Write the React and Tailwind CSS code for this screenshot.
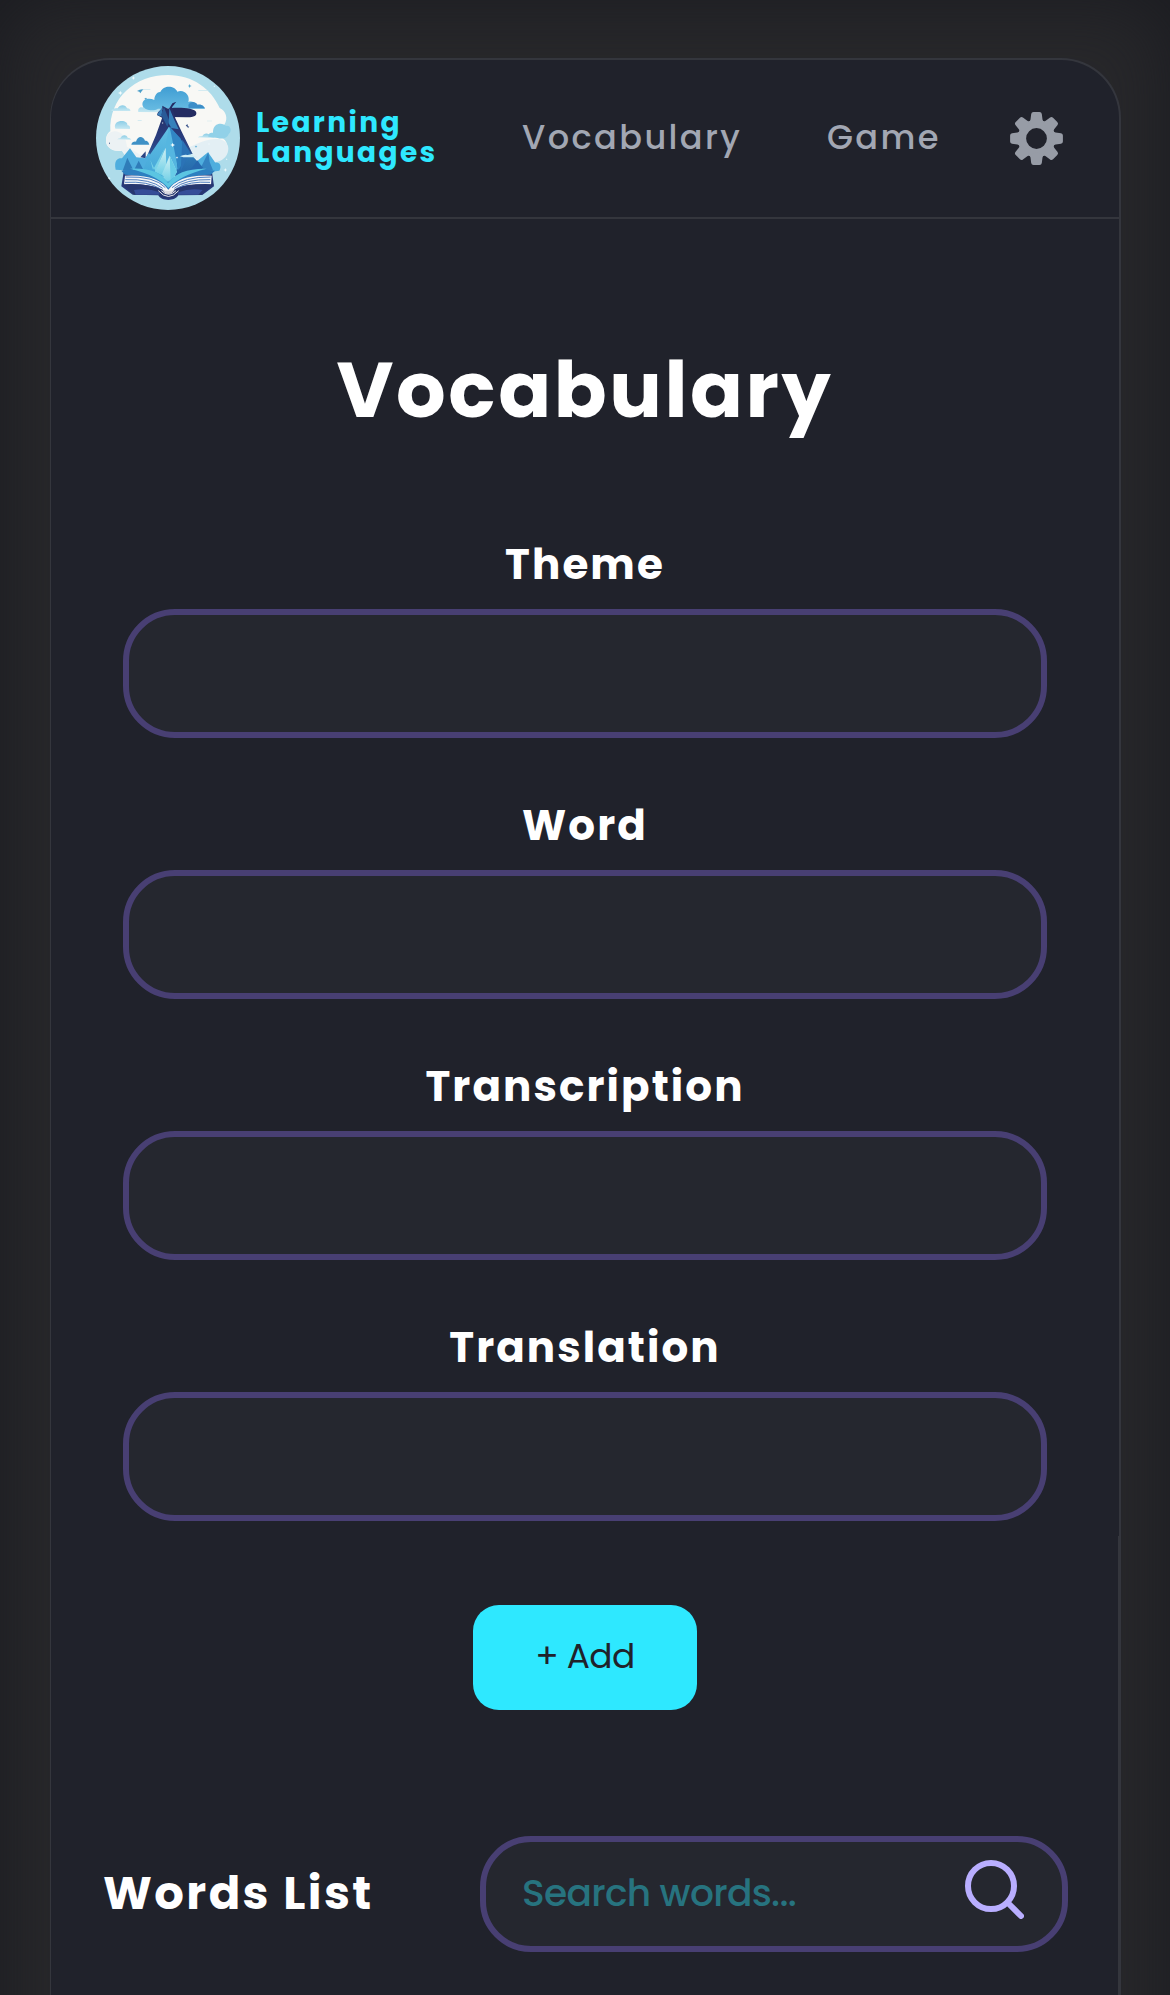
import React from "react";

const fields = [
  { id: "theme", label: "Theme" },
  { id: "word", label: "Word" },
  { id: "transcription", label: "Transcription" },
  { id: "translation", label: "Translation" },
];

const stars = [
  [121, 114, 7], [160, 69, 6], [329, 93, 6], [278, 270, 7], [436, 345, 6], [87, 370, 5],
  [348, 275, 4], [291, 308, 4], [387, 267, 3], [403, 94, 3], [440, 313, 3], [248, 204, 3],
];

function Logo() {
  return (
    <svg viewBox="48 33 432 432" className="-mt-[1px] h-[144px] w-[144px] shrink-0" aria-hidden="true">
      <defs>
        <clipPath id="disc"><circle cx="264" cy="249" r="216" /></clipPath>
        <linearGradient id="tree" x1="0" y1="0" x2="0" y2="1">
          <stop offset="0" stopColor="#3f9dd3" /><stop offset="1" stopColor="#67bbe2" />
        </linearGradient>
        <linearGradient id="navy" x1="0" y1="0" x2="0" y2="1">
          <stop offset="0" stopColor="#232b62" /><stop offset="0.7" stopColor="#2a3f80" /><stop offset="1" stopColor="#2f5f9e" />
        </linearGradient>
        <linearGradient id="blue" x1="0" y1="0" x2="0" y2="1">
          <stop offset="0" stopColor="#3a93cc" /><stop offset="1" stopColor="#2466a8" />
        </linearGradient>
        <linearGradient id="ice" x1="0" y1="0" x2="0" y2="1">
          <stop offset="0" stopColor="#62bfe4" /><stop offset="1" stopColor="#43a6d8" />
        </linearGradient>
        <linearGradient id="crystal" x1="0" y1="0" x2="0" y2="1">
          <stop offset="0" stopColor="#d3f2f4" /><stop offset="1" stopColor="#63cbe5" />
        </linearGradient>
        <linearGradient id="puff" x1="0" y1="0" x2="0" y2="1">
          <stop offset="0" stopColor="#8ccde6" /><stop offset="1" stopColor="#c6e8f2" />
        </linearGradient>
      </defs>
      <g clipPath="url(#disc)">
        <rect x="48" y="33" width="432" height="432" fill="#aedcea" />
        <path d="M91 229C87 129 165 60 264 60c75 0 130 42 155 99 18 8 27 31 14 50l-13 37c25 7 27 37 16 53-14 25-42 22-62 20L142 307c-8-6-13-15-16-20-29 4-48-11-48-30 0-15 6-24 13-28Z" fill="#f8f8f5" />
        <path d="M78 257c0-20 16-32 35-27 17 4 25 22 28 45l50 30-40 20-25-38c-28 3-48-10-48-30Z" fill="#ecf2f4" />
        <path d="M330 275c30-12 60-28 90-22 23 6 29 24 23 40-8 24-34 32-60 27l-53-10Z" fill="#e3eff4" />
        <g fill="url(#puff)">
          <path d="M96 163q9-4 17-3c6-12 24-12 28 0q8 0 10 5v3H94Z" />
          <path d="M106 221c-10-29 40-29 36-10 7-2 9 6 8 11Z" />
          <path d="M111 253q6-3 10-3c5-12 18-12 22-2q8 0 11 6Z" />
          <path d="M353 247q7-4 14-3c5-11 18-11 24-1q9 0 14 6Z" />
          <path d="M175 171c-3-13 9-17 13-13 4-24 34-24 39-3 16-2 22 9 26 17Z" />
        </g>
        <path d="M385 245c-1-12 8-12 14-12-1-32 31-31 39-20 14-5 19 18 8 24-3 13-21 16-33 12Z" fill="#91d1e8" />
        <path d="M154 269c2-9 9-10 14-9 4-18 21-19 27-3 9 0 11 6 13 12Z" fill="#3f91c6" />
        <path d="M188 152c-5-19 18-26 35-17 0-15 10-25 18-24 10-23 44-19 51-1 20-8 40 11 33 31 18-5 22 8 28 12 14-2 19 4 22 8H234c-12 8-38 7-46-9Z" fill="url(#tree)" />
        <path d="M325 150c5-11 20-13 28-1 14-2 19 6 22 11h-49Z" fill="#3b8dc8" />
        <path d="M231 180c3-12 10-15 18-16l25-5c24-2 73-1 75 14 2 12-16 14-30 14l-45-1-28 2Z" fill="#242c62" />
        <path d="M231 180l14-22 6 28Z" fill="#3a7fba" />
        <path d="M247 152L266 163 277 145 289 140 276 157 286 190 304 228 338 297 318 296 282 236 266 224 212 308 198 310 228 240 246 190Z" fill="url(#navy)" />
        <path d="M252 156l16 42-6 17-19-36Z" fill="#285a98" />
        <path d="M268 159l14 34 14 30-22-4-8-14Z" fill="#3681bb" />
        <path d="M197 289l-16 18 16 3Z" fill="#2a4483" />
        <path d="M107 344c-6-30 7-35 19-34l24-30 19 27 26 3 12-17 30 59Z" fill="#4faede" />
        <path d="M128 347l14-39 19 39 15-30 16 31Z" fill="#2f7cb8" />
        <path d="M343 325l41-33 22 31c14-3 20 12 12 24l-67 9Z" fill="#4faede" />
        <path d="M359 345l26-53 4 29 10 25Z" fill="#3483c1" />
        <path d="M269 215l30 34 32 47 39 42-48 24h-61Z" fill="url(#blue)" />
        <path d="M267 215l-62 91-20 48 85 15 18-30 5-60Z" fill="url(#ice)" />
        <path d="M267 215l-15 85 16 64 25-22-8-67Z" fill="#55b6e0" />
        <path d="M269 215l26 130 30-45-24-50Z" fill="#3186c4" />
        <path d="M307 254l-5 95 28-58Z" fill="#2b73b6" />
        <path d="M211 315l16 35 28-72-36 66Z" fill="#78d3e9" />
        <path d="M257 278l-32 72 35 18Z" fill="url(#crystal)" />
        <path d="M269 302l-23 55 22 35 23-42Z" fill="url(#crystal)" />
        <path d="M269 302l3 80 19-32Z" fill="#68cce7" />
        <path d="M324 354l29-38 15 28-30 15Z" fill="#2667ad" />
        <path d="M300 304q12-7 23-4l14-3 3 7 16 3h-46Z" fill="#cbecf4" />
        <path d="M131 351l-7 43 34 25 77 2c7 17 50 20 60 0l72-1 35-26-6-43-87 11-44 28-48-29Z" fill="#283a7b" />
        <path d="M124 347q82-12 140 34 54-46 141-34l-13 12q-83 1-127 46-37-43-130-46Z" fill="#2d7fc0" />
        <path d="M150 341q87-4 114 43 32-45 116-43-80 20-115 58-32-38-115-58Z" fill="#5bc5e2" />
        <path d="M135 362q96-6 130 42 34-48 130-42l-2 28q-90-6-112 16-15 12-31 0-30-21-118-17Z" fill="#f6f6f7" />
        <g fill="none" stroke="#4f7fc0" strokeWidth="3">
          <path d="M137 366q87-3 119 32M136 374q76-3 112 26M135 382q69-4 105 19M392 366q-81-1-116 32M391 374q-75-2-108 26M390 382q-62-4-97 17" />
        </g>
        <path d="M128 388q74-5 120 17 15 17 35 0 43-22 119-17l-40 31h-66l-17 10h-29l-16-10h-72Z" fill="#27376f" />
        <path d="M162 405q41-7 77 7v7h-72ZM295 412q36-14 73-7l-13 14h-61Z" fill="#354d98" />
        <path d="M235 406q30 33 61 0-4 24-30 24-26-1-31-24Z" fill="#273775" />
        <path d="M235 407q30 35 61 0M244 407q22 22 44 0" fill="none" stroke="#e9e8eb" strokeWidth="3" />
        <path d="M247 404q18 8 37 0-8 13-19 13-12-1-18-13Z" fill="#dddce2" />
        {stars.map(([x, y, r], i) => (
          <path
            key={i}
            transform={`translate(${x} ${y}) scale(${r})`}
            d="M0-1 .28-.28 1 0 .28.28 0 1-.28.28-1 0-.28-.28Z"
            fill={i === 2 || i === 6 ? "#4ba5d0" : "#f3fcfd"}
          />
        ))}
        <path d="M171 108l8-4 12-2-6 7-4 6-3-5ZM193 131l5-3 3 3-5 3Z" fill="#4c9fc9" />
        <path d="M317 212l5-5 2 7 4 1-4 4-2-4ZM87 262l3 3-3 3Z" fill="#344e88" />
        <path d="M188 103h23v2h-23ZM355 105h30v2h-30ZM173 196h12v2h-12ZM381 197h15v2h-15Z" fill="#c9e6f0" />
      </g>
    </svg>
  );
}

function GearIcon() {
  return (
    <svg viewBox="-26.5 -26.5 53 53" className="h-[53px] w-[53px]" fill="#979ca6" aria-hidden="true">
      <path
        fillRule="evenodd"
        d="M0-18.6A18.6 18.6 0 1 1 0 18.6 18.6 18.6 0 1 1 0-18.6ZM0-10.4A10.4 10.4 0 1 0 0 10.4 10.4 10.4 0 1 0 0-10.4Z"
      />
      {[0, 45, 90, 135, 180, 225, 270, 315].map((a) => (
        <path
          key={a}
          transform={`rotate(${a})`}
          d="M-8-16.6Q-6.3-17.2-6-19L-5.3-24.5Q-5-26.4-3-26.4H3Q5-26.4 5.3-24.5L6-19Q6.3-17.2 8-16.6L0-14Z"
        />
      ))}
    </svg>
  );
}

function SearchIcon() {
  return (
    <svg viewBox="0 0 60 60" className="h-[60px] w-[60px]" fill="none" stroke="#b9aeff" strokeWidth="6" strokeLinecap="round" aria-hidden="true">
      <circle cx="27" cy="27" r="23" />
      <path d="M43.5 43.5 57 57" />
    </svg>
  );
}

function Header() {
  return (
    <header className="flex h-[159px] items-center border-b-2 border-[#34363d] pl-[45px]">
      <Logo />
      <div className="-mt-[1px] ml-[16px] w-[180px] whitespace-nowrap text-[28px] font-bold leading-[30px] tracking-[2.4px] text-[#2ee8ff]">
        Learning
        <br />
        Languages
      </div>
      <nav className="-mt-[1px] ml-[86px] flex text-[33.6px] font-medium leading-[40px] tracking-[2.4px] text-[#a2a7b3]">
        <a className="w-[305px]">Vocabulary</a>
        <a className="w-[183px]">Game</a>
      </nav>
      <button type="button" aria-label="Settings">
        <GearIcon />
      </button>
    </header>
  );
}

function Field({ id, label }) {
  return (
    <div className="flex h-[199px] w-full flex-col items-center">
      <label htmlFor={id} className="h-[50px] whitespace-nowrap text-[42px] font-bold leading-[52px] tracking-[2.1px] text-white">
        {label}
      </label>
      <input id={id} className="mt-[20px] h-[129px] w-full rounded-[52px] border-[6px] border-[#483f73] bg-[#25272f] px-9 text-[36px] font-medium text-white outline-none" />
    </div>
  );
}

export default function App() {
  return (
    <div className="h-[1995px] w-[1170px] overflow-hidden">
      <div className="h-[2160px] bg-[#28282b] pl-[50px] pt-[58px] font-[Poppins,Inter,sans-serif] shadow-[inset_0_0_80px_#1a1b20]">
        <div className="relative h-[2090px] w-[1071px] rounded-t-[60px] border-2 border-l border-[#34363d] bg-[#20222b]">
          <Header />
          <main>
            <h1 className="mt-[121px] text-center text-[78px] font-bold leading-[100px] tracking-[2.6px] text-white">
              Vocabulary
            </h1>
            <form className="ml-[72px] mt-[99px] flex w-[924px] flex-col items-center gap-[62px]">
              {fields.map((f) => (
                <Field key={f.id} {...f} />
              ))}
              <button
                type="button"
                className="mt-[22px] h-[105px] w-[224px] rounded-[26px] bg-[#2ee8ff] pb-[1px] text-[34.4px] tracking-[-0.6px] text-[#20222b]"
              >
                + Add
              </button>
            </form>
            <section className="ml-[52px] mt-[126px] flex h-[116px] w-[965px] items-center justify-between">
              <h2 className="-mt-[3px] text-[46.5px] font-bold leading-[60px] tracking-[2.4px] text-white">Words List</h2>
              <div className="flex h-full w-[588px] items-center rounded-[51px] border-[6px] border-[#483f73] bg-[#25272f] pl-[36px] pr-[38px]">
                <input
                  placeholder="Search words..."
                  className="-mt-[1px] min-w-0 flex-1 bg-transparent text-[37.6px] font-medium tracking-[-0.7px] text-white outline-none placeholder:text-[#27737f]"
                />
                <span className="-mt-[10px]">
                  <SearchIcon />
                </span>
              </div>
            </section>
          </main>
          <div className="absolute bottom-0 right-0 top-[1476px] w-px bg-[#34363d]" />
        </div>
      </div>
    </div>
  );
}
